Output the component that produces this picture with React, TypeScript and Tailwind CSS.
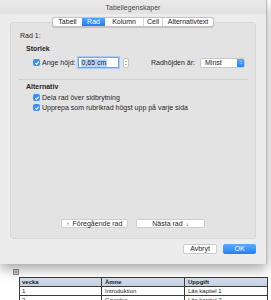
const font = "font-['Liberation_Sans',Arial,sans-serif]";

const Check = () => (
  <span className="w-[7px] h-[7px] shrink-0 rounded-[2px] bg-[#3a8ef6] flex items-center justify-center">
    <svg viewBox="0 0 10 10" className="w-[6px] h-[6px]">
      <path d="M2 5.2 L4.3 7.4 L8.2 2.6" stroke="white" strokeWidth="1.7" fill="none" />
    </svg>
  </span>
);

const tabs = [
  { label: "Tabell", w: "w-[29px]" },
  { label: "Rad", w: "w-[23px]", active: true },
  { label: "Kolumn", w: "w-[38px]" },
  { label: "Cell", w: "w-[19px]" },
  { label: "Alternativtext", w: "w-[51px]" },
];

const rows = [
  ["1", "Introduktion", "Läs kapitel 1"],
  ["2", "Grunder", "Läs kapitel 2"],
];

export default function App() {
  return (
    <div className={`w-[271px] h-[300px] bg-white overflow-hidden ${font} text-[7px] leading-[9px] text-[#262626]`}>
      {/* Dialog */}
      <div className="w-[267px] h-[264px] bg-[#ececec] border-r border-[#b9b9b9] flex flex-col shadow-[0_5px_12px_rgba(0,0,0,0.35)] relative">
        <div className="h-[14px] flex items-center justify-center bg-gradient-to-b from-[#eaeaea] to-[#e1e1e1] text-[#4a4a4a]">
          Tabellegenskaper
        </div>

        {/* Segmented tabs */}
        <div className="mt-[3px] flex justify-center relative z-10">
          <div className="flex h-[10px] bg-white rounded-[3px] border border-[#c2c2c2] overflow-hidden shadow-[0_0.5px_1px_rgba(0,0,0,0.15)]">
            {tabs.map((t, i) => (
              <div
                key={t.label}
                className={`${t.w} flex items-center justify-center leading-[8px] ${
                  t.active
                    ? "bg-gradient-to-b from-[#4ea4fd] to-[#1c7ef6] text-white"
                    : "text-[#222]"
                } ${i > 0 && !t.active && !tabs[i - 1].active ? "border-l border-[#d6d6d6]" : ""}`}
              >
                {t.label}
              </div>
            ))}
          </div>
        </div>

        {/* Group box */}
        <div className="mx-[10px] -mt-[5px] h-[217px] bg-[#e3e3e3] border border-[#d8d8d8] rounded-[3px] flex flex-col pt-[8px] pb-[10px]">
          <div className="pl-[9px]">Rad 1:</div>
          <div className="pl-[15px] mt-[4px] font-bold">Storlek</div>

          <div className="mt-[4px] h-[11px] flex items-center pl-[22px] pr-[10px]">
            <Check />
            <span className="ml-[2px] w-[36px]">Ange höjd:</span>
            <div className="w-[41px] h-[11px] bg-white border border-[#6ea6ee] shadow-[0_0_0_1px_#a9cbf6] flex items-center pl-[2px]">
              <span className="bg-[#b4d5fe] px-[0.5px] leading-[8px]">0,65 cm</span>
            </div>
            <div className="ml-[4px] w-[6px] h-[10px] bg-white rounded-[2px] border border-[#c4c4c4] flex flex-col items-center justify-center text-[#555]">
              <svg viewBox="0 0 6 10" className="w-[4px] h-[8px]">
                <path d="M1.5 3.5 L3 2 L4.5 3.5 M1.5 6.5 L3 8 L4.5 6.5" stroke="currentColor" strokeWidth="0.7" fill="none" />
              </svg>
            </div>
            <span className="flex-1 text-right pr-[5px]">Radhöjden är:</span>
            <div className="w-[45px] h-[10px] bg-white rounded-[2px] border border-[#c9c9c9] flex items-center overflow-hidden">
              <span className="flex-1 pl-[4px] leading-[8px]">Minst</span>
              <span className="w-[7px] h-full bg-gradient-to-b from-[#5aa9fd] to-[#2581f6] flex items-center justify-center">
                <svg viewBox="0 0 6 10" className="w-[4px] h-[7px]">
                  <path d="M1.5 4 L3 2.5 L4.5 4 M1.5 6 L3 7.5 L4.5 6" stroke="white" strokeWidth="0.8" fill="none" />
                </svg>
              </span>
            </div>
          </div>

          <div className="mt-[11px] mx-[7px] h-px bg-[#d0d0d0]" />

          <div className="pl-[15px] mt-[2px] font-bold">Alternativ</div>
          <div className="pl-[22px] mt-[2px] flex items-center gap-[2px]">
            <Check />
            <span>Dela rad över sidbrytning</span>
          </div>
          <div className="pl-[22px] mt-[1px] flex items-center gap-[2px]">
            <Check />
            <span>Upprepa som rubrikrad högst upp på varje sida</span>
          </div>

          <div className="mt-auto flex justify-center gap-[8px]">
            <div className="w-[67px] h-[9px] bg-white rounded-[2px] border border-[#cdcdcd] flex items-center justify-center gap-[3px] leading-[8px]">
              <span className="text-[6px]">↑</span>
              <span>Föregående rad</span>
            </div>
            <div className="w-[69px] h-[9px] bg-white rounded-[2px] border border-[#cdcdcd] flex items-center justify-center gap-[3px] leading-[8px]">
              <span>Nästa rad</span>
              <span className="text-[6px]">↓</span>
            </div>
          </div>
        </div>

        {/* Dialog buttons */}
        <div className="mt-[5px] pr-[10px] flex justify-end gap-[6px]">
          <div className="w-[34px] h-[10px] bg-white rounded-[2px] border border-[#cbcbcb] flex items-center justify-center leading-[8px]">
            Avbryt
          </div>
          <div className="w-[33px] h-[10px] rounded-[2px] bg-gradient-to-b from-[#5cabfd] to-[#1f7ff6] text-white flex items-center justify-center leading-[8px]">
            OK
          </div>
        </div>
      </div>

      {/* Document table below */}
      <div className="mt-[5px] ml-[13px] w-[6px] h-[6px] border border-[#8a8a8a] bg-[#eeeeee] flex items-center justify-center text-[#444]">
        <svg viewBox="0 0 6 6" className="w-[4px] h-[4px]">
          <path d="M3 0.5 V5.5 M0.5 3 H5.5" stroke="currentColor" strokeWidth="0.8" />
        </svg>
      </div>
      <table className="mt-[2px] ml-[19px] w-[249px] border-collapse text-[6px] leading-[8px] table-fixed">
        <thead>
          <tr className="bg-gradient-to-b from-[#d8e1ec] to-[#c0cedf]">
            <th className="w-[82px] border border-[#3a3a3a] text-left font-bold pl-[2px] h-[9px]">vecka</th>
            <th className="w-[83px] border border-[#3a3a3a] text-left font-bold pl-[3px]">Ämne</th>
            <th className="border border-[#3a3a3a] text-left font-bold pl-[3px]">Uppgift</th>
          </tr>
        </thead>
        <tbody>
          {rows.map((r) => (
            <tr key={r[0]}>
              {r.map((c, i) => (
                <td key={i} className={`border border-[#3a3a3a] h-[9px] ${i === 0 ? "pl-[2px]" : "pl-[3px]"}`}>
                  {c}
                </td>
              ))}
            </tr>
          ))}
        </tbody>
      </table>
    </div>
  );
}
